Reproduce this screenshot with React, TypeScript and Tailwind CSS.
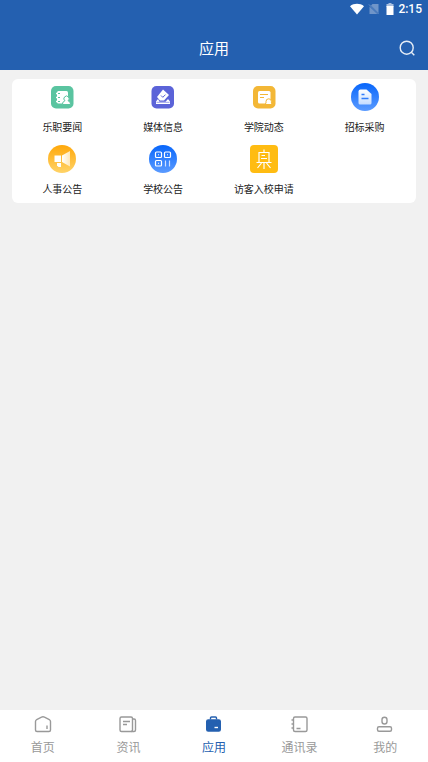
import type { ReactNode } from "react";

const apps: { name: string; icon: ReactNode }[] = [
  {
    name: "乐职要闻",
    icon: (
      <svg viewBox="0 0 28 28" className="size-7" aria-hidden="true">
        <rect x="3" y="3" width="22.5" height="22.5" rx="5" fill="#5ac4a0" />
        <rect x="9" y="8" width="11" height="12.5" rx="1.5" fill="#fff" />
        <path d="M8 10.5h3M8 14.5h3M8 18.5h3" stroke="#fff" strokeWidth="1.4" />
        <path d="M10 10.5h2M10 14.5h2M10 18.5h2" stroke="#5ac4a0" strokeWidth="1" />
        <path d="M14.5 21.5c0-2.500 1.200-3.200 2.500-3.700a2.600 2.600 0 1 1 3 0c1.300.5 2.500 1.200 2.500 3.700z" fill="#fff" stroke="#5ac4a0" strokeWidth="1" />
      </svg>
    ),
  },
  {
    name: "媒体信息",
    icon: (
      <svg viewBox="0 0 28 28" className="size-7" aria-hidden="true">
        <rect x="2.5" y="3" width="22.5" height="22.5" rx="5" fill="#5b63d8" />
        <path d="M14 6.500L20 12l-5 5.500h-4L8 14z" fill="#fff" />
        <path d="M12 12.500l1.800 1.800 2.700-2.700" fill="none" stroke="#5b63d8" strokeWidth="1" />
        <path d="M9 16l-2 2.500V21h14v-2.500L19 16l-2.500 2.700h-6z" fill="#fff" />
        <path d="M7.500 19.300h13" stroke="#5b63d8" strokeWidth="0.600" />
      </svg>
    ),
  },
  {
    name: "学院动态",
    icon: (
      <svg viewBox="0 0 28 28" className="size-7" aria-hidden="true">
        <rect x="3" y="3" width="22.5" height="22.5" rx="5" fill="#f3b736" />
        <rect x="8" y="8" width="12.5" height="12.5" rx="1.5" fill="#fff" />
        <path d="M10 11.500h8M10 14.500h4" stroke="#f3b736" strokeWidth="1.200" />
        <path d="M15 21.500l1-1.500v-1.500a2.700 2.700 0 0 1 5.400 0V20l1 1.500z" fill="#fff" stroke="#f3b736" strokeWidth="1" />
      </svg>
    ),
  },
  {
    name: "招标采购",
    icon: (
      <svg viewBox="0 0 28 28" className="size-7" aria-hidden="true">
        <defs>
          <linearGradient id="bidFill" x1="0" y1="0" x2="0" y2="1">
            <stop offset="0" stopColor="#0866fb" />
            <stop offset="1" stopColor="#5b9bff" />
          </linearGradient>
          <linearGradient id="bidPage" x1="0" y1="0" x2="0" y2="1">
            <stop offset="0" stopColor="#fff" />
            <stop offset="1" stopColor="#c4dcff" />
          </linearGradient>
        </defs>
        <circle cx="14" cy="14" r="14" fill="url(#bidFill)" />
        <path d="M9.500 6.500h6l5 4.500v9a1.500 1.500 0 0 1-1.500 1.500H9A1.500 1.500 0 0 1 7.500 20V8.500a2 2 0 0 1 2-2z" fill="url(#bidPage)" />
        <path d="M10.500 11.500h3M10.500 15.500h7" stroke="#2f7dfc" strokeWidth="1.300" />
      </svg>
    ),
  },
  {
    name: "人事公告",
    icon: (
      <svg viewBox="0 0 28 28" className="size-7" aria-hidden="true">
        <defs>
          <linearGradient id="hrFill" x1="0" y1="0" x2="0" y2="1">
            <stop offset="0" stopColor="#ffa80a" />
            <stop offset="1" stopColor="#ffd368" />
          </linearGradient>
          <linearGradient id="hrHorn" x1="0" y1="0" x2="1" y2="0">
            <stop offset="0" stopColor="#fff" />
            <stop offset="1" stopColor="#ffe8b8" />
          </linearGradient>
        </defs>
        <circle cx="14" cy="14" r="14" fill="url(#hrFill)" />
        <path d="M6.500 10.500H13v6.500H6.500z" fill="#fff" />
        <path d="M14 10.500L22 6v15.500L14 17z" fill="url(#hrHorn)" />
        <path d="M9 18h4v4h-2.500L9 20.500z" fill="#fff" />
      </svg>
    ),
  },
  {
    name: "学校公告",
    icon: (
      <svg viewBox="0 0 28 28" className="size-7" aria-hidden="true">
        <defs>
          <linearGradient id="schoolFill" x1="0" y1="0" x2="0" y2="1">
            <stop offset="0" stopColor="#0866fb" />
            <stop offset="1" stopColor="#5b9bff" />
          </linearGradient>
        </defs>
        <circle cx="14" cy="14" r="14" fill="url(#schoolFill)" />
        <g fill="none" stroke="#fff" strokeWidth="1.200">
          <rect x="6.500" y="7" width="6" height="5.500" rx="1" />
          <rect x="15.500" y="7" width="6" height="5.500" rx="1" />
          <rect x="6.500" y="15.500" width="6" height="5.500" rx="1" />
          <path d="M9 9.800h1M18 9.800h1M9 18.300h1" strokeWidth="1" />
          <path d="M16.500 15.500v6M20.500 15.500v6" stroke="#cfe1ff" />
        </g>
      </svg>
    ),
  },
  {
    name: "访客入校申请",
    icon: (
      <svg viewBox="0 0 28 28" className="size-7" aria-hidden="true">
        <rect width="28" height="28" rx="4" fill="#ffbc12" />
        <g fill="none" stroke="#fff" strokeWidth="1.200">
          <path d="M14 4.500v3M9 17V7.500h10V17M6.500 17.500h15M14 17.500V24M11.500 18L7.500 23M16.500 18l4 5" />
          <path d="M11.500 10.500H15M11 13.500h6" />
        </g>
      </svg>
    ),
  },
];

const tabs: { name: string; active?: boolean; icon: ReactNode }[] = [
  {
    name: "首页",
    icon: <path d="M2.500 6.500c0-1 .4-1.500 1.200-2L8.500 2.200c1-.5 2-.5 3 0l4.800 2.300c.8.500 1.200 1 1.200 2V15a1.500 1.500 0 0 1-1.500 1.500H4A1.500 1.500 0 0 1 2.500 15zM14 10.500v3.500" />,
  },
  {
    name: "资讯",
    icon: (
      <>
        <rect x="2" y="2" width="12.500" height="14.500" rx="1.500" />
        <path d="M14.500 4h1.500a1.500 1.500 0 0 1 1.500 1.500V15a1.500 1.500 0 0 1-1.500 1.500h-3M5 6.500h7M5 9.500h4" />
      </>
    ),
  },
  {
    name: "应用",
    active: true,
    icon: (
      <>
        <path d="M6.500 4.500V3a1 1 0 0 1 1-1h4a1 1 0 0 1 1 1v1.500" />
        <rect x="2.700" y="5" width="13.600" height="11" rx="1.500" fill="currentColor" />
        <path d="M10.500 12.500H14" stroke="#fff" />
      </>
    ),
  },
  {
    name: "通讯录",
    icon: (
      <>
        <rect x="3.500" y="2" width="13.500" height="14.500" rx="1.500" />
        <path d="M1.500 5h2M1.500 9h2M1.500 13h2M6.500 13.500h4" />
      </>
    ),
  },
  {
    name: "我的",
    icon: (
      <>
        <rect x="7" y="2.200" width="5" height="6.800" rx="2.500" />
        <rect x="2.500" y="11.700" width="14" height="4.600" rx="1.500" />
      </>
    ),
  },
];

function StatusBar() {
  return (
    <div className="flex h-[18px] items-center justify-end pr-1.5">
      <svg viewBox="0 0 14 12" className="mr-1 h-3 w-3.5" aria-hidden="true">
        <path d="M0 3.200C4 0 10 0 14 3.200L7 11.500z" fill="#fff" />
      </svg>
      <svg viewBox="0 0 12 12" className="mr-1.5 size-3" aria-hidden="true">
        <path d="M1.500 3.500V11h7.800zM4.500 1H10.500v9L3 2.500z" fill="#6f95c9" />
        <path d="M1 1.500L10.500 11" stroke="#6f95c9" />
      </svg>
      <svg viewBox="0 0 8 12" className="mr-1 h-3 w-2" aria-hidden="true">
        <path d="M2.500 0h3v1H7.500v3h-7V1h2z" fill="#a8bfdf" />
        <rect x="0.500" y="3" width="7" height="9" fill="#fff" />
      </svg>
      <span className="font-['Roboto',sans-serif] text-xs font-medium">2:15</span>
    </div>
  );
}

export default function App() {
  return (
    <div className="flex min-h-screen flex-col bg-[#f1f1f1] font-['Noto_Sans_CJK_SC',sans-serif]">
      <header className="bg-[#2460b0] text-white">
        <StatusBar />
        <div className="mt-2 grid h-11 grid-cols-[1fr_auto_1fr] items-center px-3">
          <h1 className="col-start-2 text-[15px] leading-5">应用</h1>
          <button type="button" aria-label="搜索" className="justify-self-end">
            <svg viewBox="0 0 18 18" className="size-[18px]" fill="none" stroke="#e6edf6" strokeWidth="1.400" aria-hidden="true">
              <circle cx="8.700" cy="8.700" r="6.500" />
              <path d="M13.300 13.300l3 3" />
            </svg>
          </button>
        </div>
      </header>

      <main className="flex-1 px-3 pt-[9px]">
        <div className="grid grid-cols-4 rounded-md bg-white pr-px">
          {apps.map((app) => (
            <button key={app.name} type="button" className="flex flex-col items-center gap-1.5 py-1">
              {app.icon}
              <span className="text-[10px] leading-5 whitespace-nowrap text-[#222]">{app.name}</span>
            </button>
          ))}
        </div>
      </main>

      <nav className="grid grid-cols-5 bg-white">
        {tabs.map((tab) => (
          <button
            key={tab.name}
            type="button"
            aria-current={tab.active ? "page" : undefined}
            className={`flex flex-col items-center gap-1 py-[5px] ${tab.active ? "text-[#2460b0]" : "text-[#999]"}`}
          >
            <svg viewBox="0 0 20 18" className="h-[18px] w-5" fill="none" stroke="currentColor" strokeWidth="1.400" aria-hidden="true">
              {tab.icon}
            </svg>
            <span className="text-xs leading-5">{tab.name}</span>
          </button>
        ))}
      </nav>
    </div>
  );
}
